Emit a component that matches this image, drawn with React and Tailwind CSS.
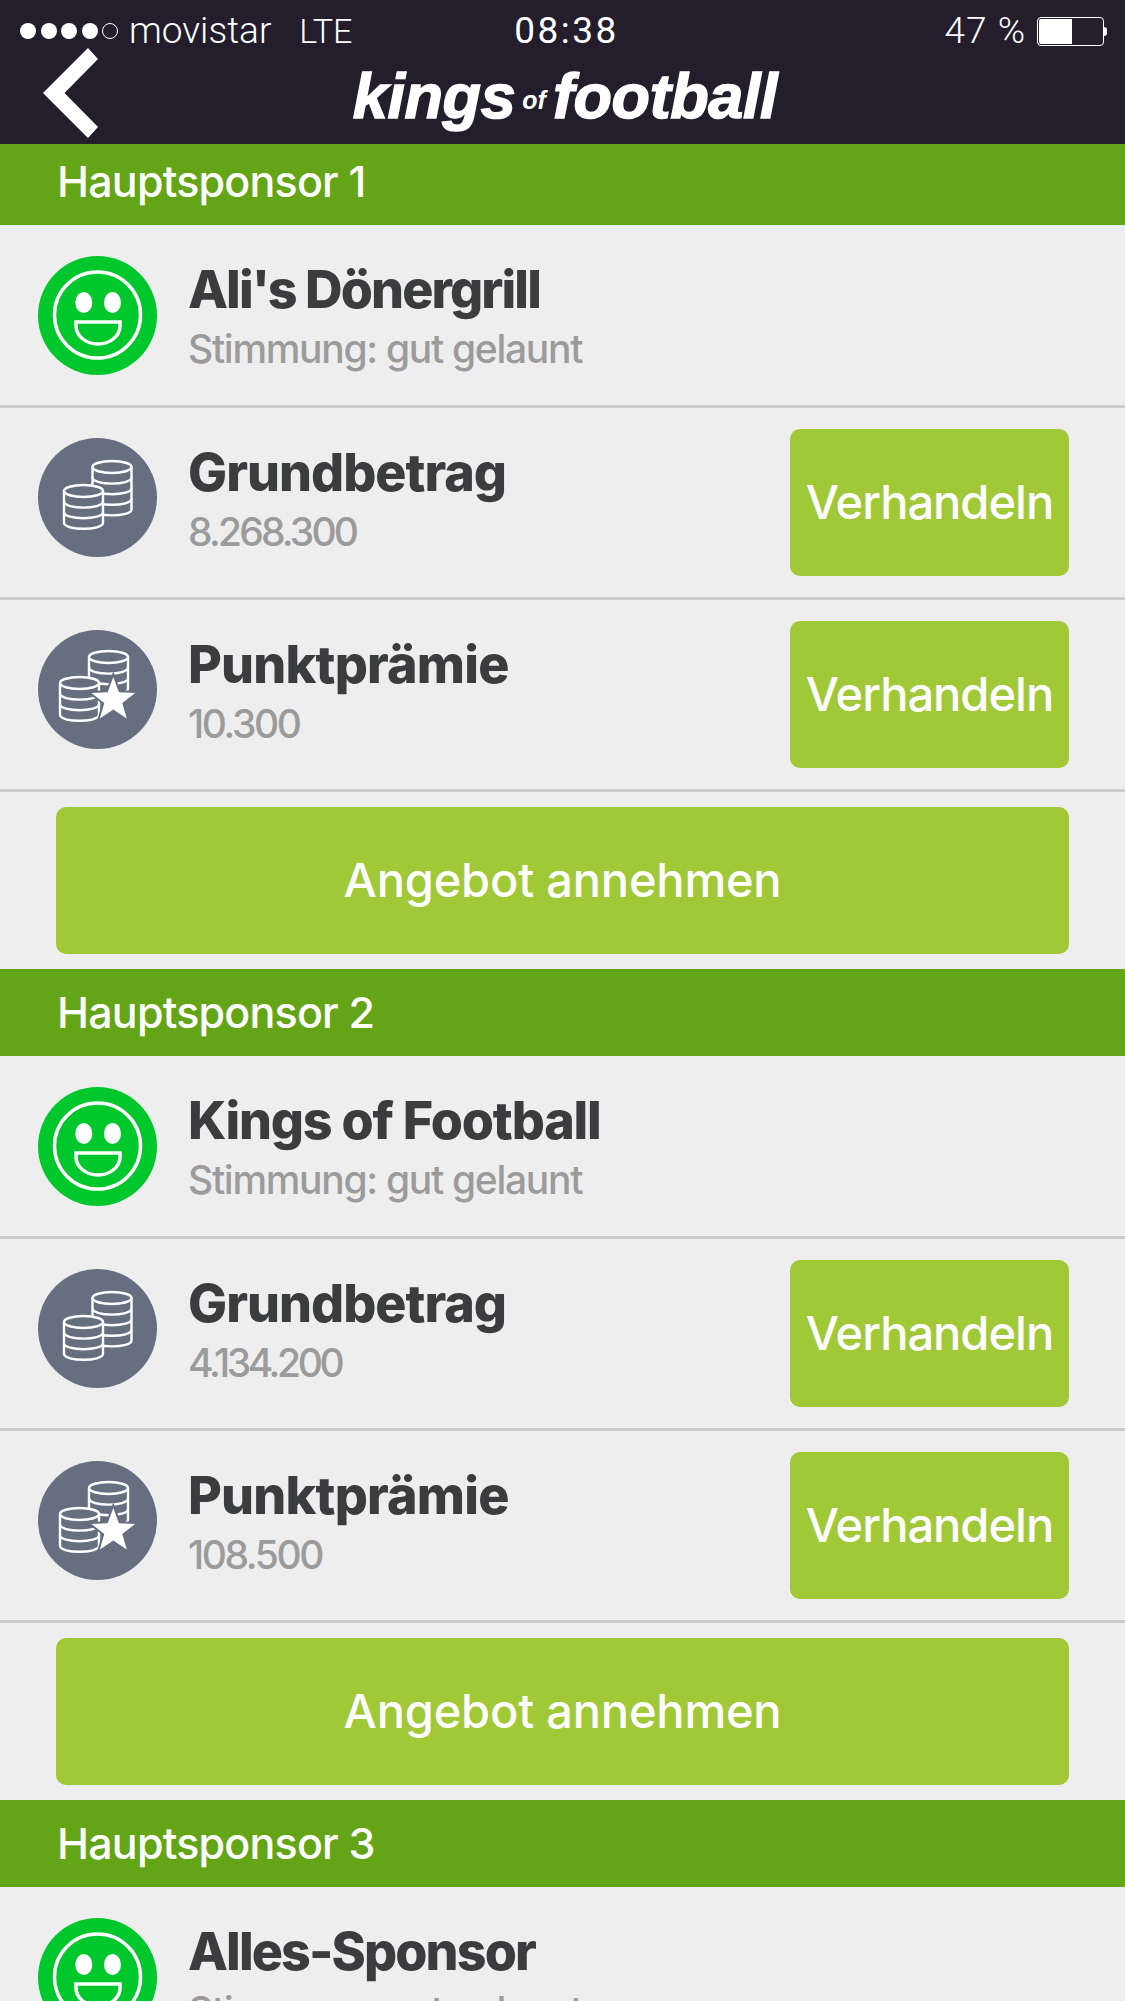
import React from 'react';

const bodyFont = "font-['Inter',sans-serif]";

function Smiley() {
  return (
    <div className="w-[119px] h-[119px] rounded-full bg-[#00c72c] shrink-0">
      <svg viewBox="0 0 119 119" className="w-full h-full" fill="none" stroke="white">
        <circle cx="59.5" cy="59" r="43" strokeWidth="3.5" />
        <ellipse cx="45.8" cy="46.5" rx="8.5" ry="10.5" fill="white" stroke="none" />
        <ellipse cx="74.5" cy="46.5" rx="8.5" ry="10.5" fill="white" stroke="none" />
        <path d="M38 66 H82 V70 C82 80 72 88 60 88 C48 88 38 80 38 70 Z" strokeWidth="3.5" />
      </svg>
    </div>
  );
}

function Stack({ x, y, rows }) {
  const w = 39;
  const pitch = 10.6;
  const end = 7 + rows * pitch;
  return (
    <g transform={`translate(${x} ${y})`} fill="#656f80" stroke="white" strokeWidth="2.4">
      <path d={`M0 7 V${end} C0 ${end + 8} ${w} ${end + 8} ${w} ${end} V7`} />
      {Array.from({ length: rows - 1 }).map((_, i) => {
        const ly = 7 + (i + 1) * pitch;
        return <path key={i} fill="none" d={`M0 ${ly} C0 ${ly + 8} ${w} ${ly + 8} ${w} ${ly}`} />;
      })}
      <ellipse cx={w / 2} cy="7" rx={w / 2} ry="6" />
    </g>
  );
}

function Coins() {
  return (
    <div className="w-[119px] h-[119px] rounded-full bg-[#656f80] shrink-0">
      <svg viewBox="0 0 119 119" className="w-full h-full">
        <Stack x={54.5} y={22} rows={4} />
        <Stack x={26} y={46} rows={3} />
      </svg>
    </div>
  );
}

function CoinsStar() {
  return (
    <div className="w-[119px] h-[119px] rounded-full bg-[#656f80] shrink-0">
      <svg viewBox="0 0 119 119" className="w-full h-full">
        <Stack x={51} y={20} rows={3} />
        <Stack x={22} y={46} rows={3} />
        <path
          d="M75.3 47 L80.9 62.3 L97.2 62.9 L84.3 72.9 L88.8 88.6 L75.3 79.5 L61.8 88.6 L66.3 72.9 L53.4 62.9 L69.7 62.3 Z"
          fill="white"
          stroke="#656f80"
          strokeWidth="4"
          paintOrder="stroke"
        />
      </svg>
    </div>
  );
}

function Row({ icon, title, titleClass, sub, subClass, action, first }) {
  return (
    <div className={`flex justify-between border-b-[3px] border-[#cccccc] ${first ? 'h-[183px] pt-[31px]' : 'h-[192px] pt-[21px]'} pl-[38px] pr-[56px]`}>
      <div className={`flex gap-[31px] ${first ? '' : 'pt-[9px]'}`}>
        {icon}
        <div className={`${bodyFont} ${first ? 'pt-[6px]' : 'pt-[7px]'}`}>
          <div className={`text-[52px] leading-[56px] font-extrabold text-[#3b3c3e] ${titleClass}`}>{title}</div>
          <div className={`mt-[9px] text-[39px] leading-[44px] font-medium text-[#9b9b9b] ${subClass}`}>{sub}</div>
        </div>
      </div>
      {action && (
        <button className={`${bodyFont} w-[279px] h-[147px] rounded-[10px] bg-[#a1c837] text-white text-[47px] font-medium tracking-[-1px]`}>
          Verhandeln
        </button>
      )}
    </div>
  );
}

function Sponsor({ label, name, nameClass, base, baseClass, bonus, barClass }) {
  return (
    <section>
      <div className={`${barClass} bg-[#64a417] pl-[57px] flex items-center text-white text-[43px] font-medium tracking-[-0.8px] ${bodyFont}`}>{label}</div>
      <Row first icon={<Smiley />} title={name} titleClass={nameClass} sub="Stimmung: gut gelaunt" subClass="tracking-[-1.3px]" />
      <Row icon={<Coins />} title="Grundbetrag" titleClass="tracking-[-1px]" sub={base} subClass={baseClass} action />
      <Row icon={<CoinsStar />} title="Punktprämie" titleClass="tracking-[-0.8px]" sub={bonus} subClass="tracking-[-2.4px]" action />
      <div className="px-[56px] py-[15px]">
        <button className={`${bodyFont} w-full h-[147px] rounded-[10px] bg-[#a1c837] text-white text-[47px] font-medium tracking-[-0.2px]`}>
          Angebot annehmen
        </button>
      </div>
    </section>
  );
}

function Header() {
  return (
    <header className="h-[144px] bg-[#231d2c] text-white">
      <div className="h-[48px] grid grid-cols-[1fr_auto_1fr] items-center pl-[20px] pr-[18px] pt-[14px] text-[37px] leading-[34px] font-light font-['Roboto',sans-serif]">
        <div className="flex items-center">
          <div className="flex gap-[4.5px] mr-[11px]">
            <span className="w-[16px] h-[16px] rounded-full bg-white" />
            <span className="w-[16px] h-[16px] rounded-full bg-white" />
            <span className="w-[16px] h-[16px] rounded-full bg-white" />
            <span className="w-[16px] h-[16px] rounded-full bg-white" />
            <span className="w-[16px] h-[16px] rounded-full border border-white" />
          </div>
          <span>movistar</span>
          <span className="ml-[28px] text-[34px]">LTE</span>
        </div>
        <div className="font-normal tracking-[2.5px] ml-[6px]">08:38</div>
        <div className="flex items-center justify-end">
          <span className="tracking-[1px]">47 %</span>
          <div className="ml-[11px] w-[67px] h-[29px] rounded-[4px] border border-white p-[1px]">
            <div className="w-[33px] h-full bg-white rounded-l-[2px]" />
          </div>
          <div className="w-[3px] h-[9px] bg-white rounded-r-full" />
        </div>
      </div>
      <div className="h-[96px] grid grid-cols-[1fr_auto_1fr]">
        <div className="pl-[43px]">
          <svg width="55" height="90" viewBox="0 0 55 90">
            <path d="M45 0 L55 11 L21.5 45 L55 79 L45 90 L0 45 Z" fill="white" />
          </svg>
        </div>
        <div className="flex items-baseline pt-[1px] ml-[5px] font-['Liberation_Sans',sans-serif] italic text-white h-[80px]">
          <span className="text-[63px] font-bold tracking-[-0.4px] [-webkit-text-stroke:1.5px_white]">kings</span>
          <span className="text-[25px] font-bold mx-[7px] -translate-y-[9px]">of</span>
          <span className="text-[63px] font-bold tracking-[-0.4px] [-webkit-text-stroke:1.5px_white]">football</span>
        </div>
        <div />
      </div>
    </header>
  );
}

export default function App() {
  return (
    <div className="h-[2001px] overflow-hidden bg-[#eeeeee]">
      <Header />
      <Sponsor barClass="h-[81px] pb-[6px]" label="Hauptsponsor 1" name="Ali's Dönergrill" nameClass="tracking-[-1.9px]" base="8.268.300" baseClass="tracking-[-2.8px]" bonus="10.300" />
      <Sponsor barClass="h-[87px]" label="Hauptsponsor 2" name="Kings of Football" nameClass="tracking-[-1.2px]" base="4.134.200" baseClass="tracking-[-3.4px]" bonus="108.500" />
      <Sponsor barClass="h-[87px]" label="Hauptsponsor 3" name="Alles-Sponsor" nameClass="tracking-[-1.9px]" base="" baseClass="" bonus="" />
    </div>
  );
}
